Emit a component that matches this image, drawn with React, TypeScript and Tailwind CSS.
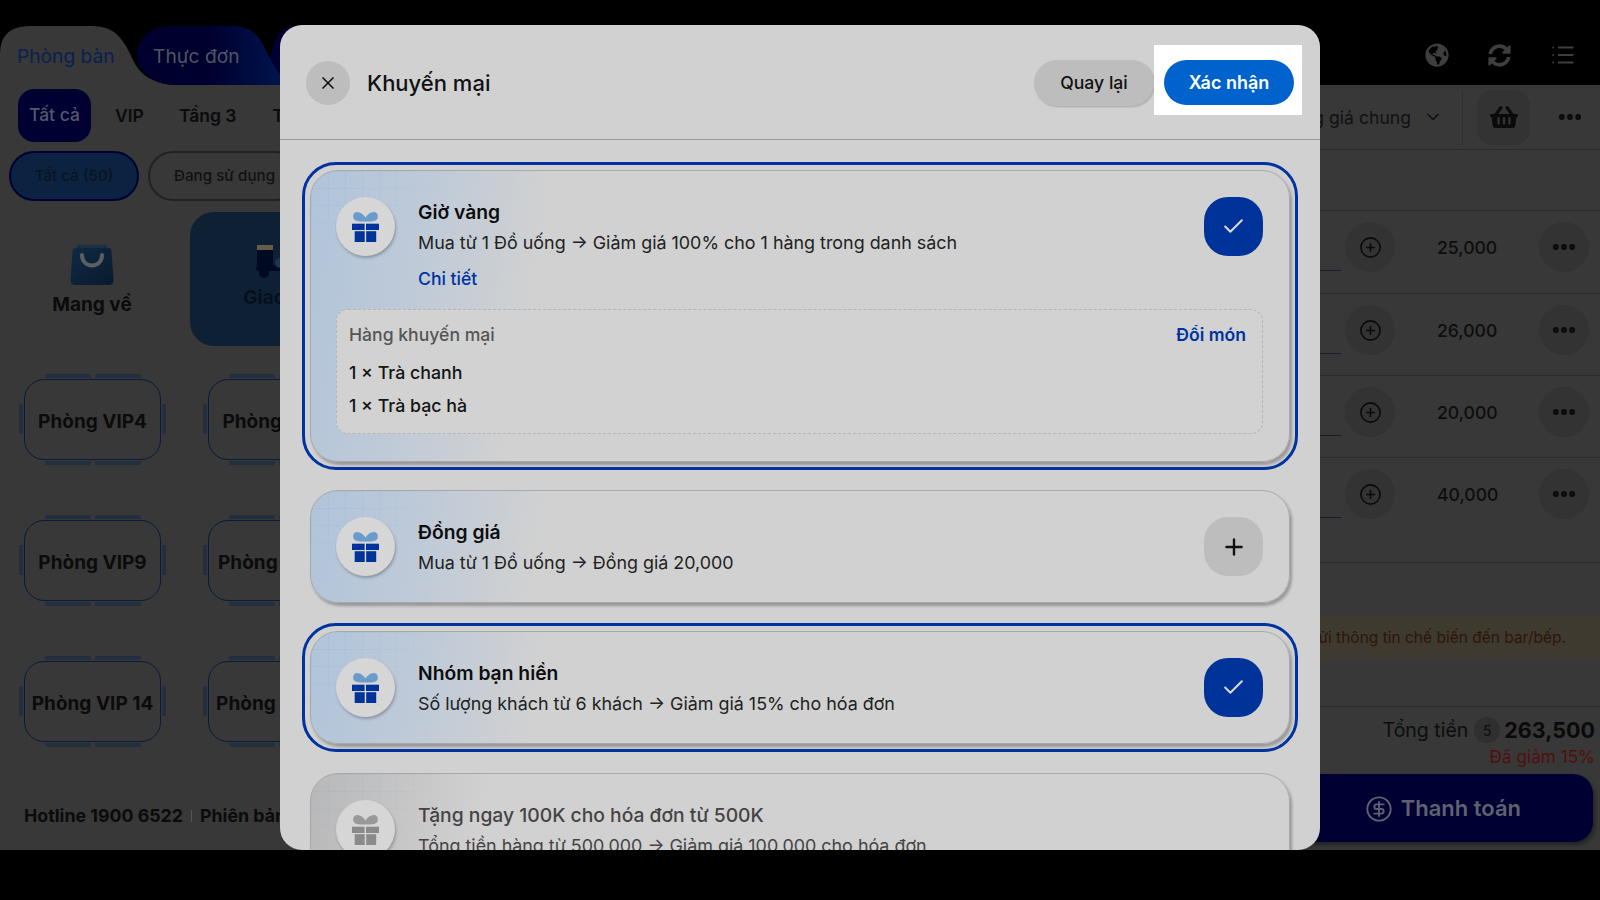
import { Check, ChevronDown, CircleDollarSign, CirclePlus, Ellipsis, List, Plus, X } from "lucide-react";
import { FaGlobeAmericas, FaShoppingBasket, FaSyncAlt } from "react-icons/fa";

const rooms = [
  ["Phòng VIP4", "Phòng VIP5"],
  ["Phòng VIP9", "Phòng VIP10"],
  ["Phòng VIP 14", "Phòng VIP 15"],
];

const items = ["25,000", "26,000", "20,000", "40,000"];

const GiftIcon = ({ muted = false }: { muted?: boolean }) => (
  <svg width="27" height="30" viewBox="0 0 27 30" className="shrink-0">
    <path
      d="M13.5 9.5C10 9.5 3 10 1.5 6.5 0.5 3 2 0 5 0 8.5 0 12 3 13.5 5.5 15 3 18.5 0 22 0 25 0 26.5 3 25.5 6.5 24 10 17 9.5 13.5 9.5Z"
      fill={muted ? "#999999" : "#6b9bcb"}
    />
    <g fill={muted ? "#8a8a8a" : "#003399"}>
      <rect x="0" y="11.7" width="12.6" height="6.3" />
      <rect x="14" y="11.7" width="13" height="6.3" />
      <rect x="2.7" y="19.2" width="10" height="10.8" />
      <rect x="14.2" y="19.2" width="10" height="10.8" />
    </g>
  </svg>
);

const PromoCard = ({
  title,
  desc,
  selected = false,
  disabled = false,
  detail = false,
}: {
  title: string;
  desc: string;
  selected?: boolean;
  disabled?: boolean;
  detail?: boolean;
}) => (
  <div className={`shrink-0 rounded-[34px] border-[3px] p-[5px] ${selected ? "border-[#0033a0]" : "border-transparent"}`}>
    <div
      className={`relative overflow-hidden rounded-[28px] border border-[#a8a8a8] pb-[25px] pl-[25px] pr-[26px] pt-[26px] shadow-[2px_3px_3px_rgba(0,0,0,0.28)] ${
        disabled
          ? "bg-[linear-gradient(100deg,#b8b8b8_0%,#d1d1d1_18%)]"
          : "bg-[linear-gradient(100deg,#b0c4da_0%,#bfcad8_12%,#d1d1d1_24%)]"
      }`}
    >
      <div className="pointer-events-none absolute left-0 top-0 h-[70px] w-[130px] bg-[linear-gradient(rgba(150,185,225,0.35)_1px,transparent_1px),linear-gradient(90deg,rgba(150,185,225,0.35)_1px,transparent_1px)] bg-[size:17px_17px] [mask-image:radial-gradient(ellipse_at_top_left,black_20%,transparent_75%)]" />
      <div className="relative flex items-start">
        <div className="flex h-[59px] w-[59px] shrink-0 items-center justify-center rounded-full bg-[#d6d6d6] shadow-[1px_2px_3px_rgba(0,0,0,0.25)]">
          <GiftIcon muted={disabled} />
        </div>
        <div className="ml-[23px] flex-1 pt-px">
          <div className={`text-[19.3px] leading-[28px] ${disabled ? "font-medium text-[#444444]" : "font-semibold text-[#0d0d0d]"}`}>{title}</div>
          <div className={`mt-[3px] text-[17.9px] leading-[28px] ${disabled ? "text-[#444444]" : "text-[#222222]"}`}>{desc}</div>
          {detail && <div className="mt-[8px] text-[17.6px] font-medium leading-[28px] text-[#0033a0]">Chi tiết</div>}
        </div>
        {!disabled && (
          <div
            className={`flex h-[59px] w-[59px] shrink-0 items-center justify-center rounded-[24px] ${
              selected ? "bg-[#003399] text-[#d8d8d8]" : "bg-[#bdbdbd] text-[#111111]"
            }`}
          >
            {selected ? <Check size={25} strokeWidth={2} /> : <Plus size={26} strokeWidth={2.2} />}
          </div>
        )}
      </div>
      {detail && (
        <div className="relative mb-[2px] mt-[16px] h-[125px] rounded-[12px] border-[1.5px] border-dashed border-[#b5b5b5] bg-[#d2d2d2] pl-[12px] pr-[11px] pt-[11px]">
          <div className="flex items-center justify-between pr-[5px] text-[17.6px] font-medium leading-[28px]">
            <span className="text-[#555555]">Hàng khuyến mại</span>
            <span className="font-semibold text-[#0033a0]">Đổi món</span>
          </div>
          <div className="mt-[10px] text-[17.8px] font-medium leading-[28px] text-[#141414]">1 × Trà chanh</div>
          <div className="mt-[5px] text-[17.8px] font-medium leading-[28px] text-[#141414]">1 × Trà bạc hà</div>
        </div>
      )}
    </div>
  </div>
);

const RoomTile = ({ name }: { name: string }) => (
  <div className="relative flex h-[81px] w-[137px] shrink-0 items-center justify-center rounded-[20px] border-[1.5px] border-[#0a1a3a] pt-[5px]">
    <span className="absolute -top-[6px] left-[20px] h-[4px] w-[46px] rounded-t-[2px] bg-[#232e3e]" />
    <span className="absolute -top-[6px] left-[70px] h-[4px] w-[46px] rounded-t-[2px] bg-[#232e3e]" />
    <span className="absolute -bottom-[6px] left-[20px] h-[4px] w-[46px] rounded-b-[2px] bg-[#232e3e]" />
    <span className="absolute -bottom-[6px] left-[70px] h-[4px] w-[46px] rounded-b-[2px] bg-[#232e3e]" />
    <span className="absolute -left-[6px] top-[24px] h-[30px] w-[4px] rounded-l-[2px] bg-[#232e3e]" />
    <span className="absolute -right-[6px] top-[24px] h-[30px] w-[4px] rounded-r-[2px] bg-[#232e3e]" />
    <span className="whitespace-nowrap text-[19px] font-bold text-[#0b0b0b]">{name}</span>
  </div>
);

export default function App() {
  return (
    <div className="relative flex h-[900px] w-[1600px] flex-col overflow-hidden bg-black font-['Inter',sans-serif]">
      {/* top tabs */}
      <div className="flex h-[85px] shrink-0 items-end justify-between">
        <div className="relative h-[59px] w-[500px]">
          <svg width="500" height="59" viewBox="0 0 500 59" className="absolute left-0 top-0">
            <defs>
              <linearGradient id="tabBlue" x1="0" x2="1" y1="0" y2="0">
                <stop offset="0" stopColor="#00002e" />
                <stop offset="0.45" stopColor="#00002e" />
                <stop offset="1" stopColor="#001a55" />
              </linearGradient>
            </defs>
            <path d="M264 59C275 20 270 0 300 0H500V59Z" fill="#000033" />
            <path d="M0 59V28Q0 0 30 0H92C116 0 124 14 134 36 142 52 158 59 180 59Z" fill="#383838" />
            <path d="M137 30C137 12 150 0 170 0H232C258 0 262 18 270 32 278 48 286 59 300 59H175C155 59 137 46 137 30Z" fill="url(#tabBlue)" />
          </svg>
          <span className="absolute left-[17px] top-[16px] text-[19.2px] leading-[28px] text-[#0a2050]">Phòng bàn</span>
          <span className="absolute left-[153px] top-[16px] text-[19.2px] leading-[28px] text-[#4f5563]">Thực đơn</span>
        </div>
        <div className="flex h-[59px] items-center gap-[39px] pb-[1px] pr-[24px] text-[#3e3e3e]">
          <FaGlobeAmericas size={24} />
          <FaSyncAlt size={23} />
          <List size={26} strokeWidth={1.8} />
        </div>
      </div>

      {/* dimmed page */}
      <div className="flex h-[765px] shrink-0 bg-[#383838]">
        <div className="w-[1000px] shrink-0 overflow-hidden">
          <div className="mt-[4px] flex h-[53px] items-center pl-[18px] text-[17.5px] font-semibold text-[#0b0b0b]">
            <span className="flex h-[53px] w-[73px] items-center justify-center rounded-[16px] bg-[#000033] font-medium text-[#55596a]">Tất cả</span>
            <span className="ml-[24px] pt-[2px]">VIP</span>
            <span className="ml-[35px] pt-[2px]">Tầng 3</span>
            <span className="ml-[36px] pt-[2px]">Tầng 4</span>
          </div>
          <div className="ml-[9px] mt-[9px] flex gap-[9px] text-[15.2px] font-medium">
            <span className="flex h-[50px] w-[130px] items-center justify-center rounded-full border-[2px] border-[#000033] bg-[#0b2340] pt-px text-[#0a1320]">Tất cả (50)</span>
            <span className="flex h-[50px] items-center rounded-full border-[2px] border-[#222222] px-[24px] pt-px text-[#111111]">Đang sử dụng</span>
          </div>
          <div className="ml-[24px] mt-[11px] flex gap-[30px]">
            <div className="flex h-[134px] w-[136px] flex-col items-center justify-center">
              <svg width="44" height="44" viewBox="0 0 44 44" className="mt-[4px]">
                <defs>
                  <linearGradient id="bag" x1="0" x2="1" y1="0" y2="1">
                    <stop offset="0" stopColor="#0f2a44" />
                    <stop offset="1" stopColor="#0a1a2c" />
                  </linearGradient>
                </defs>
                <path d="M8 3H36L38 8H6Z" fill="#1a2f44" />
                <path d="M5 6H39Q41 6 41.5 9L43.5 38Q43.5 43 39 43H5Q0.5 43 0.5 38L2.5 9Q3 6 5 6Z" fill="url(#bag)" />
                <path d="M12 13C12 27 32 27 32 13" fill="none" stroke="#5a5f66" strokeWidth="4" strokeLinecap="round" />
              </svg>
              <span className="mt-[5px] text-[19px] font-bold text-[#0b0b0b]">Mang về</span>
            </div>
            <div className="flex h-[134px] w-[200px] flex-col items-center justify-center rounded-[24px] bg-[#0e2034]">
              <svg width="68" height="33" viewBox="0 0 68 33">
                <rect x="1" y="0" width="16" height="5" fill="#6a5a4c" />
                <rect x="1" y="5" width="16" height="15" fill="#000a22" />
                <rect x="0" y="20" width="68" height="6" rx="3" fill="#000a22" />
                <circle cx="8" cy="28" r="5" fill="#000a22" />
                <circle cx="24" cy="18" r="5" fill="#1d3550" />
                <circle cx="58" cy="28" r="5" fill="#000a22" />
              </svg>
              <span className="mt-[6px] text-[19px] font-bold text-[#05101c]">Giao hàng</span>
            </div>
          </div>
          <div className="ml-[24px] mt-[33px] flex flex-col gap-[60px]">
            {rooms.map((row) => (
              <div key={row[0]} className="flex gap-[47px]">
                {row.map((name) => (
                  <RoomTile key={name} name={name} />
                ))}
              </div>
            ))}
          </div>
          <div className="ml-[24px] mt-[62px] flex items-center text-[17.8px] font-bold leading-[24px] text-[#0b0b0b]">
            <span>Hotline 1900 6522</span>
            <span className="mx-[8px] h-[12px] w-px bg-[#555555]" />
            <span>Phiên bản 2.4.1</span>
          </div>
        </div>

        <div className="flex flex-1 flex-col">
          <div className="flex h-[65px] shrink-0 items-center justify-end border-b border-[#2c2c2c] pr-[16px] text-[17.6px] text-[#111111]">
            <span className="whitespace-nowrap pt-[2px]">Bảng giá chung</span>
            <ChevronDown size={20} className="ml-[12px]" />
            <span className="ml-[19px] h-[55px] w-px bg-[#303030]" />
            <span className="ml-[14px] flex h-[55px] w-[53px] items-center justify-center rounded-[16px] bg-[#333333]">
              <FaShoppingBasket size={28} className="text-[#0a0a0a]" />
            </span>
            <Ellipsis size={28} strokeWidth={3} className="ml-[26px] text-[#0a0a0a]" />
          </div>
          <div className="h-[61px] shrink-0 border-b border-[#2c2c2c]" />
          {items.map((price, i) => (
            <div
              key={price}
              className={`flex shrink-0 items-start border-b border-[#2c2c2c] pt-[11px] ${i === 0 ? "h-[83px]" : i === 3 ? "h-[105px]" : "h-[82px]"}`}
            >
              <div className="mt-[48px] h-px flex-1 bg-[#1a1a2a]" />
              <span className="ml-[4px] flex h-[50px] w-[50px] items-center justify-center rounded-full bg-[#333333]">
                <CirclePlus size={23} strokeWidth={1.7} className="text-[#0a0a0a]" />
              </span>
              <span className="ml-[42px] w-[60px] text-center text-[17.6px] font-medium leading-[52px] text-[#0d0d0d]">{price}</span>
              <span className="ml-[42px] mr-[11px] flex h-[50px] w-[50px] items-center justify-center rounded-full bg-[#333333]">
                <Ellipsis size={28} strokeWidth={3} className="text-[#0a0a0a]" />
              </span>
            </div>
          ))}
          <div className="mt-[53px] flex h-[43px] shrink-0 items-center justify-end whitespace-nowrap bg-[#3e3a2f] pr-[34px] text-[15.5px] text-[#2e1508]">
            Gửi thông tin chế biến đến bar/bếp.
          </div>
          <div className="mt-[47px] flex h-[68px] shrink-0 flex-col items-end border-t border-[#2c2c2c] pr-[5px] pt-[7px]">
            <div className="flex items-center">
              <span className="text-[19.5px] leading-[32px] text-[#0d0d0d]">Tổng tiền</span>
              <span className="ml-[6px] flex h-[26px] w-[26px] items-center justify-center rounded-full bg-[#2f2f2f] text-[14px] text-[#0d0d0d]">5</span>
              <span className="ml-[4px] text-[21.5px] font-bold leading-[32px] text-[#0a0a0a]">263,500</span>
            </div>
            <span className="text-[17.2px] leading-[22px] text-[#520e0e]">Đã giảm 15%</span>
          </div>
          <div className="-ml-[30px] mr-[7px] flex h-[68px] shrink-0 items-center justify-end gap-[8px] rounded-[20px] bg-[#000033] pr-[72px] pt-px shadow-[2px_3px_4px_rgba(0,0,0,0.4)]">
            <CircleDollarSign size={28} strokeWidth={1.6} className="text-[#5e6270]" />
            <span className="text-[22px] font-semibold text-[#5e6270]">Thanh toán</span>
          </div>
        </div>
      </div>

      {/* promotion dialog */}
      <div className="absolute left-[280px] top-[25px] flex h-[825px] w-[1040px] flex-col overflow-hidden rounded-[22px] bg-[#d1d1d1]">
        <div className="flex h-[115px] shrink-0 items-center border-b border-[#9a9a9a] pl-[26px] pr-[18px] pt-[2px]">
          <span className="flex h-[44px] w-[44px] items-center justify-center rounded-full bg-[#bdbdbd] text-[#111111]">
            <X size={20} strokeWidth={2} />
          </span>
          <span className="ml-[17px] flex-1 text-[22px] font-medium text-[#111111]">Khuyến mại</span>
          <span className="flex h-[46px] w-[120px] items-center justify-center rounded-full bg-[#bdbdbd] text-[17.6px] font-medium text-[#111111] shadow-[1px_1px_2px_rgba(0,0,0,0.2)]">Quay lại</span>
          <div className="mt-[18px] self-start bg-white pb-[10px] pl-[10px] pr-[8px] pt-[15px]">
            <span className="flex h-[45px] w-[130px] items-center justify-center rounded-full bg-[#0062cc] text-[18px] font-semibold text-white">Xác nhận</span>
          </div>
        </div>
        <div className="flex min-h-0 flex-1 flex-col gap-[12px] overflow-hidden px-[22px] pt-[22px]">
          <PromoCard title="Giờ vàng" desc="Mua từ 1 Đồ uống → Giảm giá 100% cho 1 hàng trong danh sách" selected detail />
          <PromoCard title="Đồng giá" desc="Mua từ 1 Đồ uống → Đồng giá 20,000" />
          <PromoCard title="Nhóm bạn hiền" desc="Số lượng khách từ 6 khách → Giảm giá 15% cho hóa đơn" selected />
          <div className="mt-px">
            <PromoCard title="Tặng ngay 100K cho hóa đơn từ 500K" desc="Tổng tiền hàng từ 500,000 → Giảm giá 100,000 cho hóa đơn" disabled />
          </div>
        </div>
      </div>
    </div>
  );
}
